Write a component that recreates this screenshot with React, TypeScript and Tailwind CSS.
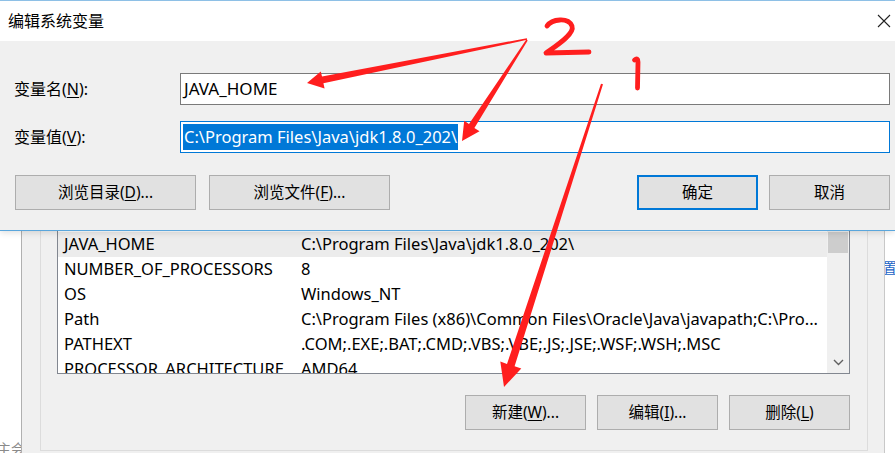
import React from "react"

const font = "font-['Noto_Sans','Noto_Sans_CJK_SC',sans-serif]"

function Btn({ children, w, primary }: { children: React.ReactNode; w: string; primary?: boolean }) {
  return (
    <div
      className={`${w} h-[35px] flex items-center justify-center bg-[#e1e1e1] text-[15.5px] text-black ${
        primary ? "border-2 border-[#0078d7]" : "border border-[#adadad]"
      }`}
    >
      {children}
    </div>
  )
}

const rows = [
  ["JAVA_HOME", "C:\\Program Files\\Java\\jdk1.8.0_202\\"],
  ["NUMBER_OF_PROCESSORS", "8"],
  ["OS", "Windows_NT"],
  ["Path", "C:\\Program Files (x86)\\Common Files\\Oracle\\Java\\javapath;C:\\Pro..."],
  ["PATHEXT", ".COM;.EXE;.BAT;.CMD;.VBS;.VBE;.JS;.JSE;.WSF;.WSH;.MSC"],
  ["PROCESSOR_ARCHITECTURE", "AMD64"],
]

// red hand-drawn markers on top of the screenshot
function Annotations() {
  return (
    <svg className="absolute inset-0 z-20 pointer-events-none" width="895" height="453" viewBox="0 0 895 453">
      <g fill="#ff1e1e">
        <polygon points="526.8,38.2 322.0,76.5 320.8,71.5 307,83 324.6,88.5 323.4,83.2 527.2,39.8" />
        <polygon points="526.3,39.6 469.0,123.9 464.2,120.8 462,141 479.5,131.2 474.4,128.0 527.7,40.4" />
        <polygon points="601.0,83.8 507.0,363.9 500.3,361.6 504,387 521.3,368.6 514.6,366.3 603.0,84.2" />
      </g>
      <g fill="none" stroke="#ff1e1e" strokeWidth="4.8" strokeLinecap="round" strokeLinejoin="round">
        <path d="M547,26 C552,19 568,17 572,26 C575,34 556,46 546,53 L589,52" />
        <path d="M634.5,60 Q638,57 638,62 L637.5,88" />
      </g>
    </svg>
  )
}

export default function App() {
  return (
    <div className={`relative w-[895px] h-[453px] overflow-hidden bg-white ${font}`}>
      {/* edit dialog */}
      <div className="h-[231px] flex flex-col border-b border-[#5aa6dc] shadow-[0_2px_6px_rgba(0,0,0,0.12)] relative z-10">
        <div className="h-[41px] bg-white border-t border-[#8ec0e6] flex items-center justify-between pl-[8px] pr-[3px]">
          <span className="text-[16px] text-black">编辑系统变量</span>
          <svg width="14" height="14" viewBox="0 0 14 14" className="mr-[1px]">
            <path d="M1 1 L13 13 M13 1 L1 13" stroke="#222" strokeWidth="1.1" />
          </svg>
        </div>
        <div className="flex-1 bg-[#f0f0f0] pt-[32px] pr-[5px] flex flex-col">
          <div className="flex items-center h-[32px]">
            <span className="w-[180px] pl-[14px] text-[16px] text-black">
              变量名(<span className="underline underline-offset-2">N</span>):
            </span>
            <div className="flex-1 h-[32px] bg-white border border-[#7a7a7a] flex items-center pl-[3px] text-[17px] text-black">
              JAVA_HOME
            </div>
          </div>
          <div className="flex items-center h-[32px] mt-[16px]">
            <span className="w-[180px] pl-[14px] text-[16px] text-black">
              变量值(<span className="underline underline-offset-2">V</span>):
            </span>
            <div className="flex-1 h-[32px] bg-white border border-[#0078d7] flex items-center pl-[2px]">
              <span className="bg-[#0078d7] text-white text-[16.5px] leading-[26px] px-[1px]">
                C:\Program Files\Java\jdk1.8.0_202\
              </span>
            </div>
          </div>
          <div className="flex mt-[22px] pl-[15px]">
            <Btn w="w-[181px]">
              浏览目录(<span className="underline underline-offset-2">D</span>)...
            </Btn>
            <div className="ml-[13px]">
              <Btn w="w-[181px]">
                浏览文件(<span className="underline underline-offset-2">F</span>)...
              </Btn>
            </div>
            <div className="ml-auto flex gap-[11px]">
              <Btn w="w-[121px]" primary>
                确定
              </Btn>
              <Btn w="w-[121px]">取消</Btn>
            </div>
          </div>
        </div>
      </div>

      {/* environment variables window behind */}
      <div className="h-[222px] flex">
        <div className="w-[21px] bg-white flex flex-col justify-end overflow-hidden">
          <span className="-ml-[3px] mb-[-6px] whitespace-nowrap text-[14px] text-[#8a8a8a]">主会</span>
        </div>
        <div className="w-[1px] bg-[#b0b0b0]" />
        <div className="w-[862px] bg-[#f0f0f0] pl-[18px] pr-[16px]">
          <div className="h-[220px] border-l border-r border-b border-[#dcdcdc] pl-[16px] pr-[17px]">
            <div className="h-[143px] border-l border-r border-b border-[#828790] bg-white flex">
              <div className="flex-1 pt-[1px] overflow-hidden text-[16.5px] text-black">
                {rows.map(([k, v], i) => (
                  <div key={k} className={`h-[25px] flex items-center whitespace-nowrap ${i === 0 ? "bg-[#ececec]" : ""}`}>
                    <span className="w-[243px] pl-[6px]">{k}</span>
                    <span>{v}</span>
                  </div>
                ))}
              </div>
              <div className="w-[22px] bg-[#f0f0f0] flex flex-col justify-between items-center pt-[1px] pb-[7px]">
                <div className="w-[20px] h-[21px] bg-[#cdcdcd]" />
                <svg width="11" height="7" viewBox="0 0 11 7">
                  <path d="M1 1 L5.5 5.5 L10 1" fill="none" stroke="#606060" strokeWidth="1.4" />
                </svg>
              </div>
            </div>
            <div className="flex justify-end gap-[11px] mt-[21px]">
              <Btn w="w-[121px]">
                新建(<span className="underline underline-offset-2">W</span>)...
              </Btn>
              <Btn w="w-[121px]">
                编辑(<span className="underline underline-offset-2">I</span>)...
              </Btn>
              <Btn w="w-[121px]">
                删除(<span className="underline underline-offset-2">L</span>)
              </Btn>
            </div>
          </div>
        </div>
        <div className="w-[1px] bg-[#c8c8c8]" />
        <div className="flex-1 bg-white overflow-hidden pt-[24px]">
          <span className="-ml-[2px] whitespace-nowrap text-[14px] text-[#1a63c6]">置</span>
        </div>
      </div>

      <Annotations />
    </div>
  )
}
